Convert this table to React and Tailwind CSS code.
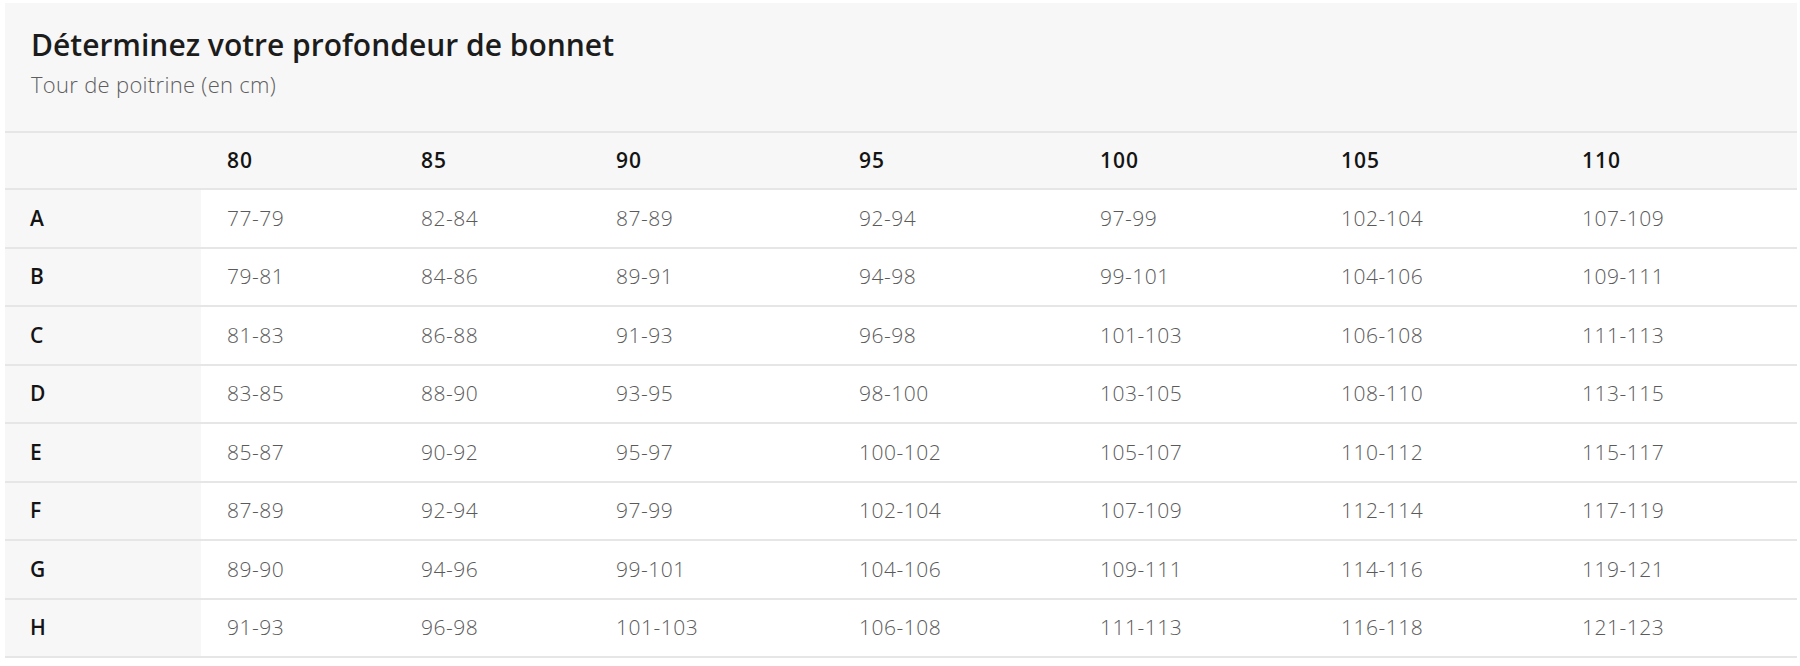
import React from 'react';

const sizes = ['80', '85', '90', '95', '100', '105', '110'];

const rows = [
  ['A', '77-79', '82-84', '87-89', '92-94', '97-99', '102-104', '107-109'],
  ['B', '79-81', '84-86', '89-91', '94-98', '99-101', '104-106', '109-111'],
  ['C', '81-83', '86-88', '91-93', '96-98', '101-103', '106-108', '111-113'],
  ['D', '83-85', '88-90', '93-95', '98-100', '103-105', '108-110', '113-115'],
  ['E', '85-87', '90-92', '95-97', '100-102', '105-107', '110-112', '115-117'],
  ['F', '87-89', '92-94', '97-99', '102-104', '107-109', '112-114', '117-119'],
  ['G', '89-90', '94-96', '99-101', '104-106', '109-111', '114-116', '119-121'],
  ['H', '91-93', '96-98', '101-103', '106-108', '111-113', '116-118', '121-123'],
];

// colonnes: libellé + 7 tailles
const gridCols = 'grid grid-cols-[196px_194px_195px_243px_241px_241px_241px_241px]';

const App = () => {
  return (
    <div className="min-h-[666px] bg-white pt-[3px] pl-[5px] font-['Open_Sans','Liberation_Sans',sans-serif]">
      <div className="w-[1792px]">
        {/* En-tête */}
        <div className="h-[128px] bg-[#f7f7f7] px-[26px] pt-[23px]">
          <h1 className="text-[30px] leading-[38px] font-semibold text-[#1c1c1c]">
            Déterminez votre profondeur de bonnet
          </h1>
          <p className="mt-[6px] text-[22px] leading-[28px] font-light tracking-[0.3px] text-[#5e5e5e]">
            Tour de poitrine (en cm)
          </p>
        </div>

        {/* Ligne des tours de dessous */}
        <div className={`${gridCols} h-[59px] bg-[#f7f7f7] border-y-2 border-[#e6e6e6]`}>
          <div />
          {sizes.map((s) => (
            <div key={s} className="flex items-center pl-[26px] text-[21px] font-semibold tracking-[1px] text-[#141414]">
              {s}
            </div>
          ))}
        </div>

        {/* Bonnets */}
        {rows.map(([cup, ...vals]) => (
          <div key={cup} className={`${gridCols} h-[58.5px] border-b-2 border-[#e6e6e6]`}>
            <div className="flex items-center pl-[25px] bg-[#f7f7f7] text-[21px] font-semibold text-[#141414]">
              {cup}
            </div>
            {vals.map((v, i) => (
              <div key={i} className="flex items-center pl-[26px] text-[21px] font-light tracking-[0.5px] text-[#5a5a5a]">
                {v}
              </div>
            ))}
          </div>
        ))}
      </div>
    </div>
  );
};

export default App;
